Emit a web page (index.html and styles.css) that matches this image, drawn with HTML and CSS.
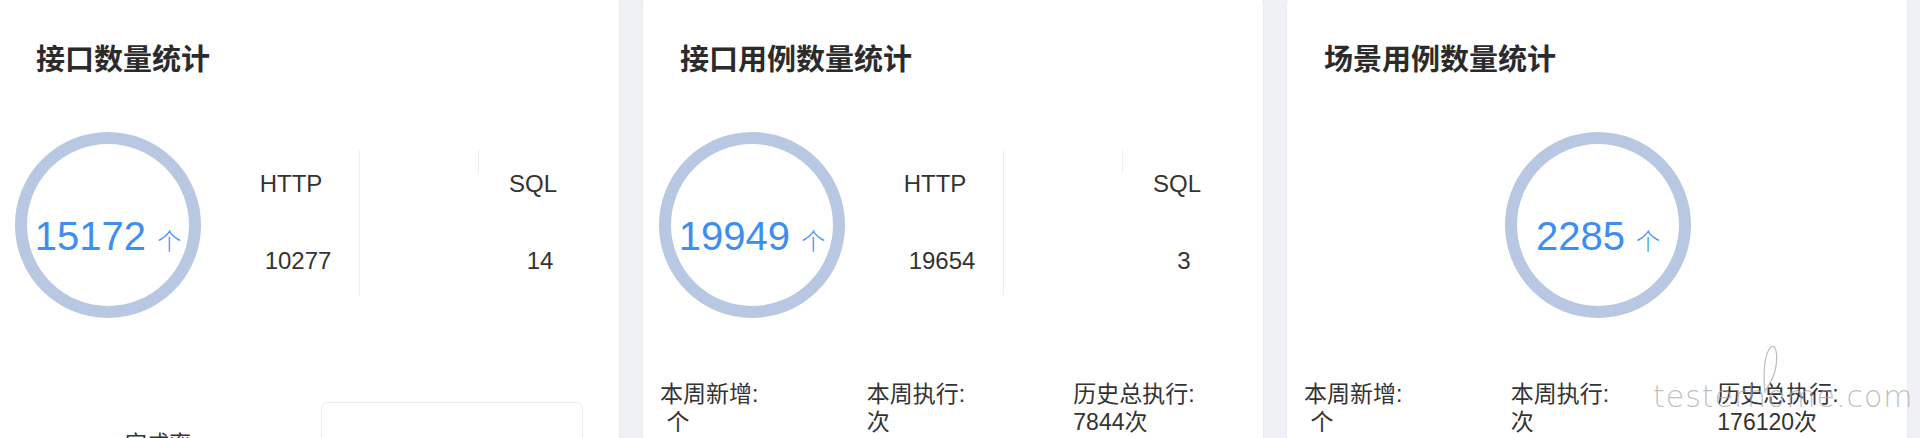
FILE: index.html
```html
<!DOCTYPE html>
<html lang="zh-CN">
<head>
<meta charset="utf-8">
<title>统计</title>
<link rel="stylesheet" href="styles.css">
</head>
<body>
<div class="board">
  <section class="card">
    <h2 class="title">接口数量统计</h2>
    <div class="stat">
      <div class="ring"><span class="num">15172 <span class="unit">个</span></span></div>
      <div class="types">
        <div class="col c1"><div class="head">HTTP</div><div class="val">10277</div></div>
        <div class="col c2"><div class="tick"></div></div>
        <div class="col c3"><div class="head">SQL</div><div class="val">14</div></div>
      </div>
    </div>
    <div class="rate">
      <div class="rate-label">完成率</div>
      <div class="rate-box"></div>
    </div>
  </section>

  <section class="card">
    <h2 class="title">接口用例数量统计</h2>
    <div class="stat">
      <div class="ring"><span class="num">19949 <span class="unit">个</span></span></div>
      <div class="types">
        <div class="col c1"><div class="head">HTTP</div><div class="val">19654</div></div>
        <div class="col c2"><div class="tick"></div></div>
        <div class="col c3"><div class="head">SQL</div><div class="val">3</div></div>
      </div>
    </div>
    <div class="summary">
      <div class="sum-col"><div>本周新增:</div><div class="sv">&nbsp;个</div></div>
      <div class="sum-col"><div>本周执行:</div><div class="sv">次</div></div>
      <div class="sum-col"><div>历史总执行:</div><div class="sv">7844次</div></div>
    </div>
  </section>

  <section class="card">
    <h2 class="title">场景用例数量统计</h2>
    <div class="stat stat-center">
      <div class="ring"><span class="num">2285 <span class="unit">个</span></span></div>
    </div>
    <div class="summary">
      <div class="sum-col"><div>本周新增:</div><div class="sv">&nbsp;个</div></div>
      <div class="sum-col"><div>本周执行:</div><div class="sv">次</div></div>
      <div class="sum-col"><div>历史总执行:</div><div class="sv">176120次</div></div>
    </div>
  </section>

  <div class="watermark" aria-hidden="true">
    <svg class="loop" width="20" height="50" viewBox="0 0 20 50"><path d="M4 48 C2 30 3 8 10 2 C16 -2 17 14 14 26 C12 34 8 40 4 46" fill="none" stroke="#bdbdbd" stroke-width="1.2"/></svg>
    <span>testerhome.com</span>
  </div>
</div>
</body>
</html>
```

FILE: styles.css
```css
* { box-sizing: border-box; }
html, body { margin: 0; padding: 0; }
body {
  background: #f0f1f5;
  font-family: "Liberation Sans", "Noto Sans CJK SC", sans-serif;
  color: #333;
  width: 1920px;
  height: 438px;
  overflow: hidden;
}
.board {
  position: relative;
  display: flex;
  gap: 24px;
  margin-left: -1px;
  margin-top: -4px;
}
.card {
  width: 620px;
  height: 460px;
  background: #fff;
  border-radius: 8px;
  box-shadow: 0 0 3px rgba(0, 0, 0, 0.06);
  overflow: hidden;
}
.title {
  margin: 47px 0 0 37px;
  font-family: "Noto Sans CJK SC", sans-serif;
  font-size: 29px;
  line-height: 29px;
  font-weight: 700;
  color: #2b2b2b;
}
.stat {
  display: flex;
  margin-top: 60px;
  padding-left: 16px;
}
.stat-center { justify-content: center; padding-left: 2px; }
.ring {
  width: 186px;
  height: 186px;
  border: 12px solid #b8c8e3;
  border-radius: 50%;
  display: flex;
  align-items: center;
  justify-content: center;
  padding-top: 26px;
  flex: none;
}
.num {
  font-size: 40px;
  line-height: 46px;
  color: #3d8ef0;
  white-space: nowrap;
}
.unit {
  font-family: "Noto Sans CJK SC", sans-serif;
  font-size: 24px;
  font-weight: 300;
}
.types {
  display: flex;
  margin-left: 22px;
  margin-top: 18px;
}
.col { flex: none; }
.c1 { width: 137px; height: 145px; border-right: 1px solid #eceef4; text-align: center; }
.c2 { width: 119px; }
.tick { width: 100%; height: 23px; border-right: 1px solid #eceef4; }
.c3 { width: 108px; text-align: center; }
.head {
  margin-top: 19px;
  font-size: 24px;
  line-height: 30px;
  color: #333;
}
.val {
  margin-top: 47px;
  padding-left: 14px;
  font-size: 24px;
  line-height: 30px;
  color: #333;
}
.rate {
  display: flex;
  margin-top: 84px;
}
.rate-label {
  margin: 25px 0 0 126px;
  width: 66px;
  font-family: "Noto Sans CJK SC", sans-serif;
  font-size: 22px;
  line-height: 28px;
  color: #333;
}
.rate-box {
  margin-left: 130px;
  width: 262px;
  height: 80px;
  border: 1px solid #e8eaf1;
  border-radius: 6px;
}
.summary {
  display: grid;
  grid-template-columns: repeat(3, 1fr);
  margin-top: 62px;
}
.sum-col {
  padding-left: 17px;
  font-family: "Liberation Sans", "Noto Sans CJK SC", sans-serif;
  font-size: 23px;
  line-height: 28px;
  color: #333;
}
.watermark {
  position: absolute;
  left: 1654px;
  top: 349px;
  width: 262px;
  height: 80px;
  color: rgba(170, 170, 170, 0.75);
  font-family: "DejaVu Sans", sans-serif;
  font-weight: 200;
  font-size: 30px;
  letter-spacing: 1px;
  pointer-events: none;
}
.watermark span {
  position: absolute;
  left: 0;
  top: 34px;
  line-height: 36px;
  white-space: nowrap;
}
.watermark .loop {
  position: absolute;
  left: 108px;
  top: 0;
}
```
